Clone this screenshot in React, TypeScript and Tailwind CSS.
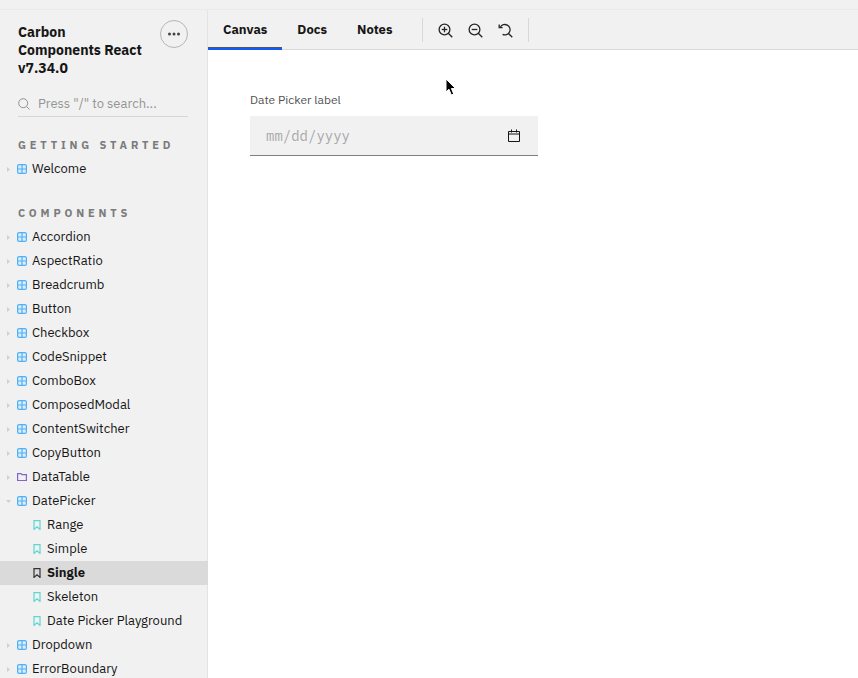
import React from "react";

const sans = "font-['IBM_Plex_Sans','Roboto',sans-serif]";
const mono = "font-['IBM_Plex_Mono','DejaVu_Sans_Mono',monospace]";

type Kind = "component" | "folder" | "story";
type Item = { name: string; kind?: Kind; open?: boolean; selected?: boolean };

const components: Item[] = [
  { name: "Accordion" },
  { name: "AspectRatio" },
  { name: "Breadcrumb" },
  { name: "Button" },
  { name: "Checkbox" },
  { name: "CodeSnippet" },
  { name: "ComboBox" },
  { name: "ComposedModal" },
  { name: "ContentSwitcher" },
  { name: "CopyButton" },
  { name: "DataTable", kind: "folder" },
  { name: "DatePicker", open: true },
  { name: "Range", kind: "story" },
  { name: "Simple", kind: "story" },
  { name: "Single", kind: "story", selected: true },
  { name: "Skeleton", kind: "story" },
  { name: "Date Picker Playground", kind: "story" },
  { name: "Dropdown" },
  { name: "ErrorBoundary" },
];

function ItemIcon({ kind, selected }: { kind: Kind; selected?: boolean }) {
  if (kind === "folder") {
    return (
      <svg className="h-[10px] w-[10px] shrink-0" viewBox="0 0 10 10" fill="none" stroke="#8662cf" strokeWidth="1.200" aria-hidden="true">
        <path d="M.6 1.600H4l1 1h4.400v5.900H.6z" />
      </svg>
    );
  }
  if (kind === "story") {
    return (
      <svg className="h-[10px] w-[10px] shrink-0" viewBox="0 0 10 10" fill="none" stroke={selected ? "#333333" : "#5fd6cf"} strokeWidth="1.200" aria-hidden="true">
        <path d="M2 .6h6v8.800L5 6.800 2 9.400z" />
      </svg>
    );
  }
  return (
    <svg className="h-[10px] w-[10px] shrink-0" viewBox="0 0 10 10" fill="#d8ecfa" stroke="#4fb0f5" strokeWidth="1.200" aria-hidden="true">
      <rect x=".6" y=".6" width="8.800" height="8.800" rx="1.500" />
      <path d="M5 1v8M1 5h8" />
    </svg>
  );
}

function TreeRow({ name, kind = "component", open, selected }: Item) {
  const story = kind === "story";
  return (
    <li>
      <a
        href="#"
        aria-current={selected ? "page" : undefined}
        className={`flex h-6 items-center text-[13px] leading-6 whitespace-nowrap text-[#161616] ${
          story ? "pl-8" : "pl-[6px]"
        } ${selected ? "bg-[#dadada] font-bold" : ""}`}
      >
        {!story && (
          <svg className="mr-[6px] h-[5px] w-[5px] shrink-0" viewBox="0 0 5 5" fill="#d0d0d0" aria-hidden="true">
            {open ? <path d="M0 1h5L2.500 4z" /> : <path d="M1 0v5l3-2.500z" />}
          </svg>
        )}
        <ItemIcon kind={kind} selected={selected} />
        <span className="ml-[5px]">{name}</span>
      </a>
    </li>
  );
}

function Section({ title, items }: { title: string; items: Item[] }) {
  return (
    <section>
      <h2 className="pl-[18px] text-[11px] leading-6 font-bold tracking-[0.35em] whitespace-nowrap text-[#7b7b7b] uppercase">
        {title}
      </h2>
      <ul>
        {items.map((i) => (
          <TreeRow key={i.name} {...i} />
        ))}
      </ul>
    </section>
  );
}

function Sidebar() {
  return (
    <aside className="flex w-52 shrink-0 flex-col overflow-hidden pt-[13px] shadow-[inset_-1px_0_0_#e4e4e4]">
      <header className="flex shrink-0 items-start justify-between pr-5 pl-[18px]">
        <h1 className="text-sm leading-[18px] font-bold text-[#161616]">
          Carbon
          <br />
          Components React
          <br />
          v7.34.0
        </h1>
        <button
          aria-label="Menu"
          className="mt-[-3px] flex h-7 w-7 shrink-0 items-center justify-center rounded-full border border-[#b5b5b5]"
        >
          <svg className="h-3 w-3" viewBox="0 0 12 12" fill="#444444" aria-hidden="true">
            <circle cx="1.500" cy="6" r="1.500" />
            <circle cx="6" cy="6" r="1.500" />
            <circle cx="10.500" cy="6" r="1.500" />
          </svg>
        </button>
      </header>
      <div className="mt-[14px] mr-5 ml-[18px] flex h-[26px] shrink-0 items-center border-b border-[#d6d6d6]">
        <svg className="h-3 w-3 shrink-0" viewBox="0 0 12 12" fill="none" stroke="#929292" aria-hidden="true">
          <circle cx="5.200" cy="5.200" r="4.500" />
          <path d="M8.500 8.500 11.500 11.500" />
        </svg>
        <input
          type="search"
          aria-label="Search"
          placeholder={'Press "/" to search...'}
          className="ml-2 w-full min-w-0 bg-transparent text-[13px] leading-5 outline-none placeholder:text-[#959595]"
        />
      </div>
      <nav className="mt-4 flex shrink-0 flex-col gap-5">
        <Section title="Getting Started" items={[{ name: "Welcome" }]} />
        <Section title="Components" items={components} />
      </nav>
    </aside>
  );
}

function ZoomIcon({ mode }: { mode: "in" | "out" | "reset" }) {
  return (
    <svg className="h-[15px] w-[15px]" viewBox="0 0 15 15" fill="none" stroke="#262626" strokeWidth="1.300" aria-hidden="true">
      <path d="M10.300 10.300 14.300 14.300" />
      {mode === "reset" ? (
        <>
          <path d="M2.300 4.200A5.200 5.200 0 1 1 4.600 11.400" />
          <path d="M1.200 1.500v3.200h3.400" />
        </>
      ) : (
        <>
          <circle cx="6.500" cy="6.500" r="5.400" />
          <path d="M3.700 6.500h5.600" />
          {mode === "in" && <path d="M6.500 3.700v5.600" />}
        </>
      )}
    </svg>
  );
}

function Toolbar() {
  const tab = "h-10 px-[15px] text-[13px] font-bold text-[#161616]";
  const tool = "flex h-[30px] w-[30px] items-center justify-center";
  return (
    <div className="flex h-10 shrink-0 items-center shadow-[inset_0_-1px_0_#d8d8d8]">
      <div role="tablist" className="flex">
        <button
          role="tab"
          aria-selected="true"
          className={`${tab} shadow-[inset_0_-2px_0_#0f5bfa,inset_0_-3px_0_#55565c]`}
        >
          Canvas
        </button>
        <button role="tab" aria-selected="false" className={tab}>Docs</button>
        <button role="tab" aria-selected="false" className={tab}>Notes</button>
      </div>
      <div className="ml-[15px] flex h-6 items-center border-x border-[#d8d8d8] pr-2 pl-[7px]">
        <button aria-label="Zoom in" className={tool}><ZoomIcon mode="in" /></button>
        <button aria-label="Zoom out" className={tool}><ZoomIcon mode="out" /></button>
        <button aria-label="Reset zoom" className={tool}><ZoomIcon mode="reset" /></button>
      </div>
    </div>
  );
}

function DatePicker() {
  return (
    <div className="flex w-72 flex-col">
      <label htmlFor="date" className="mb-2 text-xs leading-4 text-[#525252]">
        Date Picker label
      </label>
      <div className="flex h-10 items-center border-b border-[#808080] bg-[#f1f1f1] px-4">
        <input
          id="date"
          type="text"
          placeholder="mm/dd/yyyy"
          className={`${mono} w-full min-w-0 bg-transparent text-sm outline-none placeholder:text-[#a8a8a8]`}
        />
        <svg className="h-4 w-4 shrink-0" viewBox="0 0 16 16" fill="none" stroke="#161616" aria-hidden="true">
          <path d="M2.500 3.500h11v10h-11zM2.500 6h11M5.500 1.500v3M10.500 1.500v3" />
        </svg>
      </div>
    </div>
  );
}

export default function App() {
  return (
    <div className={`${sans} relative flex h-screen flex-col overflow-hidden bg-[#f1f1f1] pt-[9px] text-[#161616]`}>
      <div className="flex min-h-0 flex-1 border-t border-[#eaeaea]">
        <Sidebar />
        <main className="flex min-w-0 flex-1 flex-col">
          <Toolbar />
          <div className="flex-1 bg-white px-[42px] pt-[42px]">
            <DatePicker />
          </div>
        </main>
      </div>
      <svg className="absolute top-[78px] left-[445px] h-[18px] w-3" viewBox="0 0 12 18" aria-hidden="true">
        <path d="M1 1v13l3-2.800L6.300 17l2.400-1L6.400 10.500H10.500z" fill="#000000" stroke="#ffffff" />
      </svg>
    </div>
  );
}
